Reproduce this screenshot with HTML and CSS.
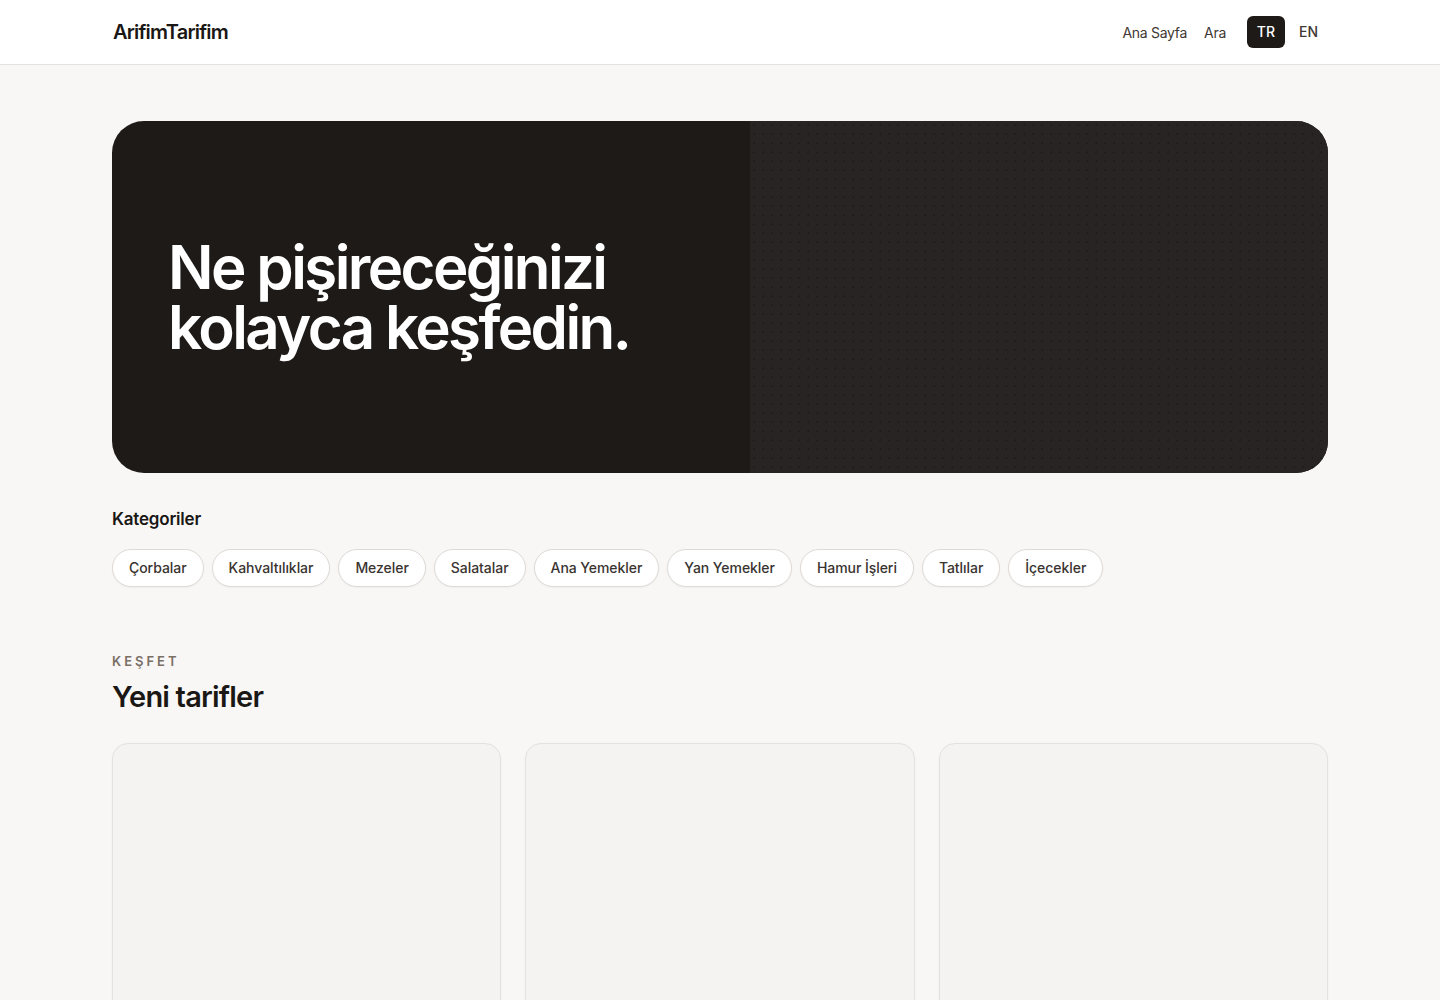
FILE: index.html
```html
<!DOCTYPE html>
<html lang="tr">
	<head>
		<meta charset="utf-8">
		<title>ArifimTarifim</title>
		<link rel="stylesheet" href="styles.css">
	</head>
	<body>
		<!-- üst menü -->
		<header class="topbar">
			<div class="wrap topbar-in">
				<a class="logo" href="#">ArifimTarifim</a>
				<nav class="nav">
					<a class="link" href="#">Ana Sayfa</a>
					<a class="link" href="#">Ara</a>
					<a class="lang active" href="#">TR</a>
					<a class="lang" href="#">EN</a>
				</nav>
			</div>
		</header>

		<main class="wrap">
			<!-- hero alanı -->
			<section class="hero">
				<div class="hero-text">
					<h1>Ne pişireceğinizi<br>kolayca keşfedin.</h1>
				</div>
				<div class="hero-pic"></div>
			</section>

			<section class="cats">
				<h2>Kategoriler</h2>
				<div class="chips">
					<a class="chip" href="#">Çorbalar</a>
					<a class="chip" href="#">Kahvaltılıklar</a>
					<a class="chip" href="#">Mezeler</a>
					<a class="chip" href="#">Salatalar</a>
					<a class="chip" href="#">Ana Yemekler</a>
					<a class="chip" href="#">Yan Yemekler</a>
					<a class="chip" href="#">Hamur İşleri</a>
					<a class="chip" href="#">Tatlılar</a>
					<a class="chip" href="#">İçecekler</a>
				</div>
			</section>

			<section class="latest">
				<p class="eyebrow">KEŞFET</p>
				<h2>Yeni tarifler</h2>
				<div class="cards">
					<div class="card"></div>
					<div class="card"></div>
					<div class="card"></div>
				</div>
			</section>
		</main>
	</body>
</html>
```

FILE: styles.css
```css
*{
	margin: 0;
	padding: 0;
	box-sizing: border-box;
}
body{
	background-color: #f8f7f5;
	color: #1a1715;
	font-family: Inter, "Liberation Sans", sans-serif;
}
a{
	color: inherit;
	text-decoration: none;
}
.wrap{
	width: 1216px;
	margin: 0 auto;
}

/* üst menü */
.topbar{
	background-color: #fff;
	border-bottom: 1px solid #e6e3df;
	height: 65px;
}
.topbar-in{
	height: 64px;
	display: flex;
	align-items: center;
	justify-content: space-between;
}
.logo{
	font-size: 20px;
	font-weight: 600;
	letter-spacing: -0.8px;
	color: #1a1715;
	margin-left: 1px;
}
.nav{
	display: flex;
	align-items: center;
	font-size: 14px;
	color: #3f3833;
}
.nav .link{
	letter-spacing: -0.3px;
}
.nav .link + .link{
	margin-left: 17px;
}
.nav .lang{
	height: 32px;
	line-height: 32px;
	padding: 0 10px;
	border-radius: 6px;
	font-weight: 500;
	margin-left: 4px;
}
.nav .lang.active{
	background-color: #1d1a18;
	color: #fff;
	margin-left: 21px;
	width: 38px;
	text-align: center;
	padding: 0;
}

/* hero */
.hero{
	margin-top: 56px;
	height: 352px;
	border-radius: 32px;
	overflow: hidden;
	display: grid;
	grid-template-columns: 638px 1fr;
	background-color: #1d1a18;
}
.hero-text{
	display: flex;
	align-items: center;
	padding: 0 0 0 56px;
}
.hero h1{
	color: #fff;
	font-size: 60px;
	line-height: 60px;
	font-weight: 600;
	letter-spacing: -2.6px;
}
.hero-pic{
	background-color: #282423;
	background-image: radial-gradient(rgba(0,0,0,0.25) 1px, transparent 1px);
	background-size: 9px 9px;
}

/* kategoriler */
.cats{
	margin-top: 36px;
}
.cats h2{
	font-size: 17px;
	font-weight: 600;
	letter-spacing: -0.2px;
}
.chips{
	margin-top: 20px;
	display: flex;
	flex-wrap: wrap;
	gap: 8px;
}
.chip{
	height: 38px;
	line-height: 36px;
	padding: 0 16px;
	border: 1px solid #dedad5;
	border-radius: 19px;
	background-color: #fff;
	font-size: 14px;
	font-weight: 500;
	color: #3a3430;
	letter-spacing: -0.05px;
	box-shadow: 0 1px 2px rgba(0,0,0,0.04);
}

/* yeni tarifler */
.latest{
	margin-top: 66px;
}
.eyebrow{
	font-size: 13px;
	font-weight: 600;
	letter-spacing: 3px;
	color: #7a6f65;
}
.latest h2{
	margin-top: 10px;
	font-size: 29px;
	font-weight: 600;
	letter-spacing: -0.8px;
}
.cards{
	margin-top: 29px;
	display: grid;
	grid-template-columns: repeat(3, 1fr);
	gap: 24px;
}
.card{
	height: 300px;
	border: 1px solid #e5e2de;
	border-radius: 16px;
	background-color: #f4f3f1;
	box-shadow: 0 1px 3px rgba(0,0,0,0.04);
}
```
